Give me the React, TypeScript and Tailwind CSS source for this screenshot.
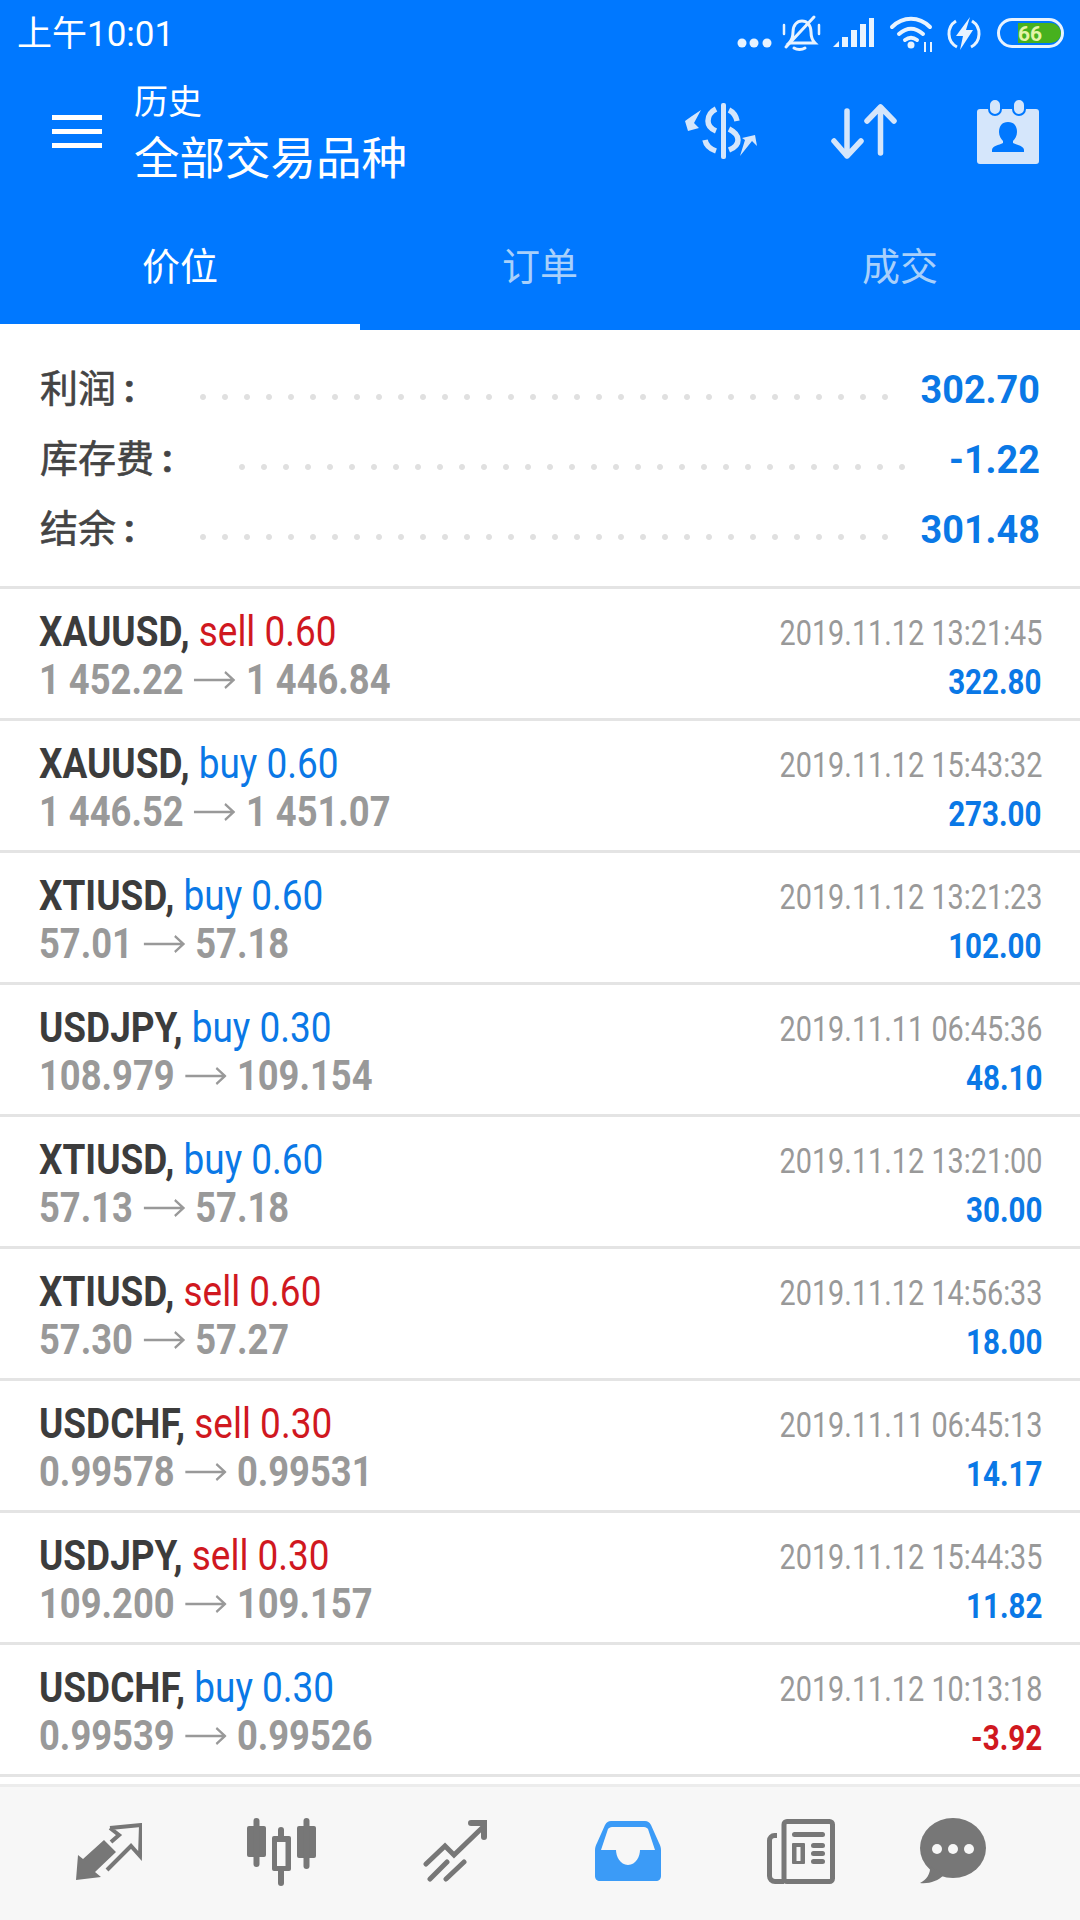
const sans = "font-['Roboto','Noto_Sans_CJK_SC',sans-serif]";

type Trade = {
  symbol: string;
  side: "buy" | "sell";
  lots: string;
  open: string;
  close: string;
  time: string;
  profit: string;
};

const trades: Trade[] = [
  { symbol: "XAUUSD", side: "sell", lots: "0.60", open: "1 452.22", close: "1 446.84", time: "2019.11.12 13:21:45", profit: "322.80" },
  { symbol: "XAUUSD", side: "buy", lots: "0.60", open: "1 446.52", close: "1 451.07", time: "2019.11.12 15:43:32", profit: "273.00" },
  { symbol: "XTIUSD", side: "buy", lots: "0.60", open: "57.01", close: "57.18", time: "2019.11.12 13:21:23", profit: "102.00" },
  { symbol: "USDJPY", side: "buy", lots: "0.30", open: "108.979", close: "109.154", time: "2019.11.11 06:45:36", profit: "48.10" },
  { symbol: "XTIUSD", side: "buy", lots: "0.60", open: "57.13", close: "57.18", time: "2019.11.12 13:21:00", profit: "30.00" },
  { symbol: "XTIUSD", side: "sell", lots: "0.60", open: "57.30", close: "57.27", time: "2019.11.12 14:56:33", profit: "18.00" },
  { symbol: "USDCHF", side: "sell", lots: "0.30", open: "0.99578", close: "0.99531", time: "2019.11.11 06:45:13", profit: "14.17" },
  { symbol: "USDJPY", side: "sell", lots: "0.30", open: "109.200", close: "109.157", time: "2019.11.12 15:44:35", profit: "11.82" },
  { symbol: "USDCHF", side: "buy", lots: "0.30", open: "0.99539", close: "0.99526", time: "2019.11.12 10:13:18", profit: "-3.92" },
];

function StatusBar() {
  return (
    <div className="flex h-[68px] items-center justify-between pl-[17px] pr-[16px] text-white">
      <span className="text-[35px] leading-none">上午10:01</span>
      <svg width="330" height="44" viewBox="0 0 330 44" fill="none">
        <g fill="#e8f3ff">
          <circle cx="8" cy="31" r="4.5" />
          <circle cx="20" cy="31" r="4.5" />
          <circle cx="33" cy="31" r="4.5" />
        </g>
        <g stroke="#e8f3ff" strokeWidth="3" strokeLinecap="round">
          <path d="M55 31c3-3 4-6 4-11 0-7 4-11 9-11s9 4 9 11c0 5 1 8 4 11z" />
          <path d="M60 36c3 2 8 2 11 0" />
          <path d="M52 35 80 5" />
          <path d="M50 13v9M85 13v9" strokeWidth="2.5" />
        </g>
        <g fill="#e8f3ff">
          <path d="M99 35l6-6v6z" />
          <rect x="108" y="25" width="6" height="10" />
          <rect x="117" y="18" width="6" height="17" />
          <rect x="126" y="12" width="6" height="23" />
          <rect x="135" y="6" width="5" height="29" />
        </g>
        <g stroke="#e8f3ff" strokeWidth="4" strokeLinecap="round">
          <path d="M158 15c11-11 27-11 38 0" />
          <path d="M165 22c8-7 16-7 24 0" />
          <path d="M171 28c4-3 8-3 12 0" />
        </g>
        <circle cx="177" cy="33" r="3.5" fill="#e8f3ff" />
        <path d="M191 30v10M197 30v10" stroke="#e8f3ff" strokeWidth="2" />
        <path d="M222 9a15 15 0 0 0 1 26M238 9a15 15 0 0 1-1 26" stroke="#e8f3ff" strokeWidth="3" />
        <path d="M236 5 222 24h7l-3 14 13-20h-7z" fill="#e8f3ff" />
        <rect x="264.5" y="7.5" width="64" height="27" rx="13.5" stroke="#e8f3ff" strokeWidth="3" />
        <path d="M284 11h33a10 10 0 0 1 0 20h-33z" fill="#47b11e" />
        <text x="284" y="29" fontSize="21" fontWeight="700" fill="#e4f5a8" fontFamily="Roboto, sans-serif">
          66
        </text>
      </svg>
    </div>
  );
}

function Toolbar() {
  return (
    <div className="flex h-[119px] items-start text-white">
      <div className="ml-[52px] mt-[47px] flex w-[82px] flex-col gap-[9px]">
        <div className="h-[5px] w-[50px] bg-white" />
        <div className="h-[5px] w-[50px] bg-white" />
        <div className="h-[5px] w-[50px] bg-white" />
      </div>
      <div className="mt-[14px] flex flex-col">
        <span className="text-[34px] leading-[40px]">历史</span>
        <span className="mt-[10px] text-[45.500px] leading-[56px]">全部交易品种</span>
      </div>
      <div className="ml-auto flex items-start pr-[40px] pt-[30px] text-[#d5e6fb]">
        <svg width="76" height="56" viewBox="0 0 76 56" fill="currentColor" className="mr-[70px] mt-[5px]">
          <rect x="36" y="0" width="5" height="56" rx="2" />
          <path d="M31 6C25 9 23 13 23 18 23 23 26 26 31 28M20 37C21 42 25 46 31 48M44 7C48 9 51 13 52 18M44 26C50 29 53 32 53 37 53 42 49 45 44 47" fill="none" stroke="currentColor" strokeWidth="5.5" />
          <path d="M16 7 7 13 0 18 3 28 14 25 9 20zM55 53 60 37 57 35 70 32 72 43 67 38z" />
        </svg>
        <svg width="66" height="58" viewBox="0 0 66 58" fill="none" stroke="currentColor" strokeWidth="5.5" strokeLinecap="round" strokeLinejoin="round" className="mr-[79px] mt-[5px]">
          <path d="M16 8V53M3 38 16 53 30 38" />
          <path d="M49.5 50V4M36 18 49.5 4 63 18" />
        </svg>
        <svg width="64" height="66" viewBox="0 0 64 66" fill="currentColor">
          <path d="M4 11h56a3 3 0 0 1 3 3v49a3 3 0 0 1-3 3H4a3 3 0 0 1-3-3V14a3 3 0 0 1 3-3z" />
          <rect x="13" y="1" width="12" height="16" rx="6" stroke="#0078ff" strokeWidth="2" />
          <rect x="37" y="1" width="12" height="16" rx="6" stroke="#0078ff" strokeWidth="2" />
          <path fill="#0078ff" d="M32 24c6 0 9 4 9 10 0 4-2 7-4 9v2c4 2 11 3 11 7v2H16v-2c0-4 7-5 11-7v-2c-2-2-4-5-4-9 0-6 3-10 9-10z" />
        </svg>
      </div>
    </div>
  );
}

function Tabs() {
  return (
    <div className="flex h-[143px] flex-col">
      <div className="grid h-[137px] grid-cols-3 text-[38px]">
        <div className="flex items-start justify-center pt-[58px] leading-[44px] text-white">价位</div>
        <div className="flex items-start justify-center pt-[58px] leading-[44px] text-[#a8d0fb]">订单</div>
        <div className="flex items-start justify-center pt-[58px] leading-[44px] text-[#a8d0fb]">成交</div>
      </div>
      <div className="h-[6px] w-[360px] bg-white" />
    </div>
  );
}

type SummaryProps = { label: string; value: string; labelClass: string; dotsClass: string };

function SummaryRow({ label, value, labelClass, dotsClass }: SummaryProps) {
  return (
    <div className="flex h-[70px] items-center pl-[40px] pr-[40px]">
      <span className={`whitespace-nowrap text-[38px] leading-none text-[#444] [-webkit-text-stroke:0.6px_#444] ${labelClass}`}>
        {label}
        <span className="ml-[8px] font-bold">:</span>
      </span>
      <span
        className={`mt-[16px] h-[6px] flex-1 bg-[radial-gradient(circle,#e0e0e0_2.5px,transparent_3.5px)] bg-[length:22px_6px] ${dotsClass}`}
      />
      <span className="mt-[2px] w-[125px] origin-right scale-x-[0.97] whitespace-nowrap text-right text-[39px] font-bold leading-none text-[#0a78e6]">
        {value}
      </span>
    </div>
  );
}

function TradeRow({ trade }: { trade: Trade }) {
  const sideColor = trade.side === "buy" ? "text-[#0a78e6]" : "text-[#d0181f]";
  const loss = trade.profit.startsWith("-");
  return (
    <div className="flex h-[132px] border-b-[3px] border-[#e4e4e4] pl-[39px] pr-[38px]">
      <div className="flex flex-col pt-[18px]">
        <div className="origin-left scale-x-[0.88] whitespace-nowrap text-[42px] leading-[50px]">
          <span className="font-bold text-[#3c3c3c]">{trade.symbol}, </span>
          <span className={sideColor}>
            {trade.side} {trade.lots}
          </span>
        </div>
        <div className="flex origin-left scale-x-[0.865] items-center whitespace-nowrap text-[42px] font-bold leading-[46px] text-[#999]">
          {trade.open}
          <svg width="48" height="20" viewBox="0 0 48 20" fill="none" stroke="#999" strokeWidth="2.5" className="mx-[12px]">
            <path d="M0 10H46M36 2l10 8-10 8" />
          </svg>
          {trade.close}
        </div>
      </div>
      <div className="ml-auto flex flex-col items-end pt-[21px]">
        <div className="origin-right scale-x-[0.823] whitespace-nowrap text-[35px] leading-[48px] text-[#999]">{trade.time}</div>
        <div
          className={`mt-[1px] origin-right scale-x-[0.845] whitespace-nowrap text-[35px] font-bold leading-[48px] ${
            loss ? "text-[#d0181f]" : "text-[#0a78e6]"
          }`}
        >
          {trade.profit}
        </div>
      </div>
    </div>
  );
}

function BottomNav() {
  return (
    <div className="flex h-[136px] items-start border-t-[3px] border-[#ececec] bg-[#f7f7f7] pl-[76px] pt-[31px]">
      <svg width="66" height="59" viewBox="0 0 66 59" className="mr-[105px] mt-[5px]">
        <path fill="#777" d="M0 57 2 32 7 36 28 17 40 29 19 49 25 54z" />
        <path fill="none" stroke="#777" strokeWidth="4" d="M34 5 65 2 64 33 55 23 31 47M34 5 43 12 35 19" />
      </svg>
      <svg width="69" height="68" viewBox="0 0 69 68" fill="#777" className="mr-[107px]">
        <rect x="0" y="8" width="19" height="31" rx="2" />
        <rect x="6.5" y="0" width="6" height="49" rx="3" />
        <rect x="50" y="8" width="19" height="32" rx="2" />
        <rect x="56.5" y="0" width="6" height="51" rx="3" />
        <rect x="31" y="9" width="6" height="59" rx="3" />
        <rect x="25" y="18" width="19" height="35" rx="2" />
        <rect x="30" y="24" width="8.5" height="24" fill="#f7f7f7" />
      </svg>
      <svg width="64" height="62" viewBox="0 0 64 62" fill="none" stroke="#777" strokeWidth="5" strokeLinecap="round" className="mr-[108px] mt-[2px]">
        <path d="M3 44 22 26l9 9L60 7" />
        <path d="M48 3h13v14" strokeWidth="6" />
        <path d="M7 59l17-17M23 59l18-17" />
      </svg>
      <svg width="66" height="60" viewBox="0 0 66 60" className="mr-[106px] mt-[3px]">
        <path fill="#3b9bf7" d="M16 0h34c3 0 4 1 6 4l8 18c1 2 2 4 2 7v26c0 3-2 5-5 5H5c-3 0-5-2-5-5V29c0-3 1-5 2-7l8-18c2-3 3-4 6-4z" />
        <path fill="#f7f7f7" d="M17 6h32c2 0 3 1 4 2l7 21H45c0 6-4 15-12 15s-12-9-12-15H6l7-21c1-1 2-2 4-2z" />
      </svg>
      <svg width="68" height="65" viewBox="0 0 68 65" fill="none" stroke="#777" className="mr-[85px] mt-[1px]">
        <rect x="17" y="2.5" width="48.5" height="60" rx="3" strokeWidth="5" />
        <path d="M10 16.5H7.500a5 5 0 0 0-5 5V57a5.500 5.500 0 0 0 5.500 5.500H17" strokeWidth="5" />
        <g fill="#777" stroke="none">
          <rect x="25" y="13" width="33" height="5" rx="2.500" />
          <rect x="25" y="24" width="13" height="21" rx="1" />
          <rect x="29.500" y="28" width="4" height="14" fill="#f7f7f7" />
          <rect x="44" y="24" width="14" height="5" rx="2.500" />
          <rect x="44" y="32" width="14" height="5" rx="2.500" />
          <rect x="44" y="40" width="14" height="5" rx="2.500" />
        </g>
      </svg>
      <svg width="66" height="66" viewBox="0 0 66 66" fill="#777">
        <ellipse cx="33" cy="30" rx="33" ry="30" />
        <path d="M10 48C11 56 6 62 0 65 9 66 18 63 24 57z" />
        <circle cx="17" cy="31" r="5" fill="#f7f7f7" />
        <circle cx="33" cy="31" r="5" fill="#f7f7f7" />
        <circle cx="49" cy="31" r="5" fill="#f7f7f7" />
      </svg>
    </div>
  );
}

export default function App() {
  return (
    <div className={`flex h-[1920px] w-[1080px] flex-col overflow-hidden bg-white ${sans}`}>
      <div className="bg-[#0078ff]">
        <StatusBar />
        <Toolbar />
        <Tabs />
      </div>
      <div className="flex h-[259px] flex-col border-b-[3px] border-[#e4e4e4] pt-[24px]">
        <SummaryRow label="利润" value="302.70" labelClass="w-[152px]" dotsClass="mr-[19px]" />
        <SummaryRow label="库存费" value="-1.22" labelClass="w-[191px]" dotsClass="mr-[2px]" />
        <SummaryRow label="结余" value="301.48" labelClass="w-[152px]" dotsClass="mr-[19px]" />
      </div>
      <div className="flex flex-col">
        {trades.map((t, i) => (
          <TradeRow key={i} trade={t} />
        ))}
      </div>
      <div className="h-[7px]" />
      <BottomNav />
    </div>
  );
}
